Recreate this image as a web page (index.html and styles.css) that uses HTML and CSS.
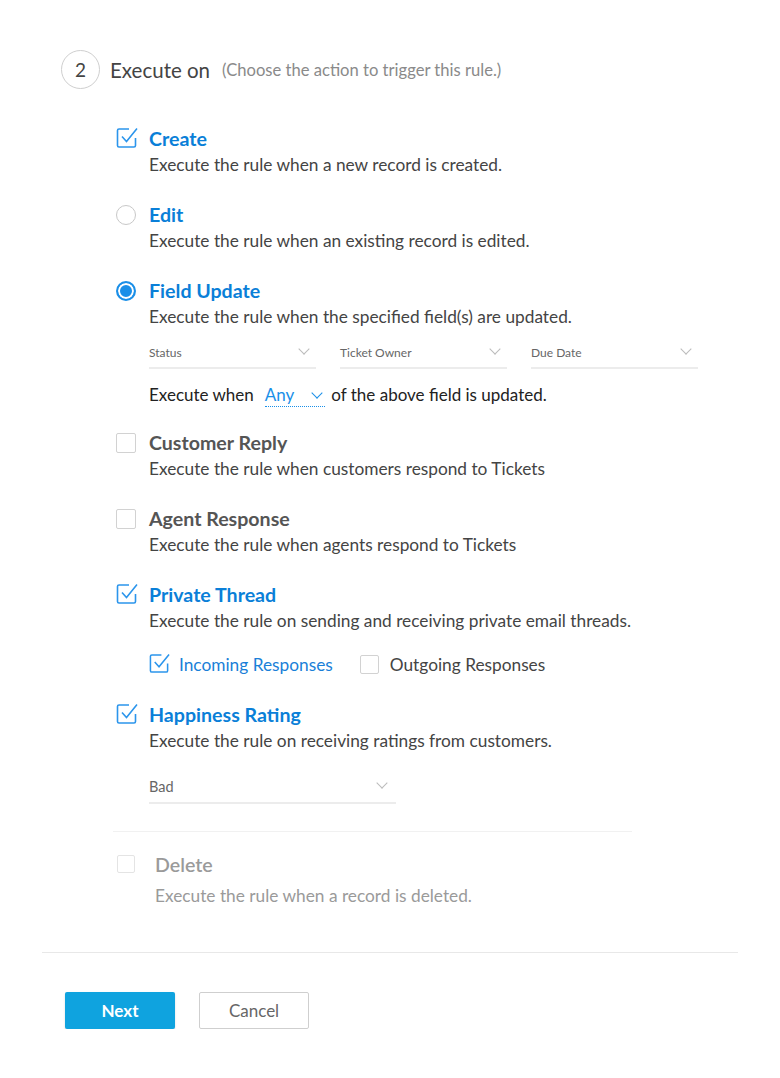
FILE: index.html
```html
<!DOCTYPE html>
<html lang="en">
<head>
    <meta charset="UTF-8">
    <meta name="viewport" content="width=device-width, initial-scale=1.0">
    <title>Execute on</title>
    <link rel="stylesheet" href="styles.css">
</head>
<body>
    <div class="rule-step">
        <div class="step-header">
            <span class="step-num">2</span>
            <span class="step-title">Execute on</span>
            <span class="step-hint">(Choose the action to trigger this rule.)</span>
        </div>

        <div class="options">
            <div class="option">
                <span class="check checked">
                    <svg viewBox="0 0 22 22" width="22" height="22"><path d="M13 2H3a1.5 1.5 0 0 0-1.5 1.5v15A1.5 1.5 0 0 0 3 20h15a1.5 1.5 0 0 0 1.5-1.5V11" fill="none" stroke="#2b95ec" stroke-width="1.6"/><path d="M6 9.5l4.5 5L21 1.5" fill="none" stroke="#2b95ec" stroke-width="1.6"/></svg>
                </span>
                <div class="option-body">
                    <div class="option-title active">Create</div>
                    <div class="option-desc">Execute the rule when a new record is created.</div>
                </div>
            </div>

            <div class="option">
                <span class="radio"></span>
                <div class="option-body">
                    <div class="option-title active">Edit</div>
                    <div class="option-desc">Execute the rule when an existing record is edited.</div>
                </div>
            </div>

            <div class="option field-update">
                <span class="radio selected"></span>
                <div class="option-body">
                    <div class="option-title active">Field Update</div>
                    <div class="option-desc">Execute the rule when the specified field(s) are updated.</div>
                    <div class="field-selects">
                        <div class="select">Status <span class="chev"></span></div>
                        <div class="select">Ticket Owner <span class="chev"></span></div>
                        <div class="select">Due Date <span class="chev"></span></div>
                    </div>
                    <div class="when-line">
                        Execute when <span class="any">Any <span class="chev blue"></span></span> of the above field is updated.
                    </div>
                </div>
            </div>

            <div class="option">
                <span class="check"></span>
                <div class="option-body">
                    <div class="option-title">Customer Reply</div>
                    <div class="option-desc">Execute the rule when customers respond to Tickets</div>
                </div>
            </div>

            <div class="option">
                <span class="check"></span>
                <div class="option-body">
                    <div class="option-title">Agent Response</div>
                    <div class="option-desc">Execute the rule when agents respond to Tickets</div>
                </div>
            </div>

            <div class="option private-thread">
                <span class="check checked">
                    <svg viewBox="0 0 22 22" width="22" height="22"><path d="M13 2H3a1.5 1.5 0 0 0-1.5 1.5v15A1.5 1.5 0 0 0 3 20h15a1.5 1.5 0 0 0 1.5-1.5V11" fill="none" stroke="#2b95ec" stroke-width="1.6"/><path d="M6 9.5l4.5 5L21 1.5" fill="none" stroke="#2b95ec" stroke-width="1.6"/></svg>
                </span>
                <div class="option-body">
                    <div class="option-title active">Private Thread</div>
                    <div class="option-desc">Execute the rule on sending and receiving private email threads.</div>
                    <div class="sub-checks">
                        <label class="sub-check on">
                            <span class="check checked small">
                                <svg viewBox="0 0 22 22" width="21" height="21"><path d="M13 2H3a1.5 1.5 0 0 0-1.5 1.5v15A1.5 1.5 0 0 0 3 20h15a1.5 1.5 0 0 0 1.5-1.5V11" fill="none" stroke="#2b95ec" stroke-width="1.6"/><path d="M6 9.5l4.5 5L21 1.5" fill="none" stroke="#2b95ec" stroke-width="1.6"/></svg>
                            </span>
                            Incoming Responses
                        </label>
                        <label class="sub-check">
                            <span class="check small"></span>
                            Outgoing Responses
                        </label>
                    </div>
                </div>
            </div>

            <div class="option">
                <span class="check checked">
                    <svg viewBox="0 0 22 22" width="22" height="22"><path d="M13 2H3a1.5 1.5 0 0 0-1.5 1.5v15A1.5 1.5 0 0 0 3 20h15a1.5 1.5 0 0 0 1.5-1.5V11" fill="none" stroke="#2b95ec" stroke-width="1.6"/><path d="M6 9.5l4.5 5L21 1.5" fill="none" stroke="#2b95ec" stroke-width="1.6"/></svg>
                </span>
                <div class="option-body">
                    <div class="option-title active">Happiness Rating</div>
                    <div class="option-desc">Execute the rule on receiving ratings from customers.</div>
                    <div class="select wide">Bad <span class="chev"></span></div>
                </div>
            </div>

            <div class="divider"></div>

            <div class="option disabled">
                <span class="check"></span>
                <div class="option-body">
                    <div class="option-title">Delete</div>
                    <div class="option-desc">Execute the rule when a record is deleted.</div>
                </div>
            </div>
        </div>

        <div class="footer">
            <button class="btn btn-primary">Next</button>
            <button class="btn btn-default">Cancel</button>
        </div>
    </div>
</body>
</html>
```

FILE: styles.css
```css
body {
    margin: 0;
    background: #fff;
    font-family: 'Lato', 'Liberation Sans', sans-serif;
    color: #444;
}

.rule-step {
    width: 780px;
}

.step-header {
    display: flex;
    align-items: center;
    padding: 50px 0 0 61px;
}

.step-num {
    width: 37px;
    height: 37px;
    border: 1px solid #cfcfcf;
    border-radius: 50%;
    display: flex;
    align-items: center;
    justify-content: center;
    font-size: 19px;
    color: #444;
}

.step-title {
    margin-left: 10px;
    font-size: 20.5px;
    color: #444;
}

.step-hint {
    margin-left: 12px;
    font-size: 16.6px;
    color: #8a8a8a;
}

.options {
    padding: 38px 0 0 116px;
}

.option {
    display: flex;
    margin-bottom: 26px;
}

.option.field-update {
    margin-bottom: 24px;
}

.option.private-thread {
    margin-bottom: 28px;
}

.option-body {
    margin-left: 13px;
}

.option-title {
    font-size: 19.6px;
    line-height: 24px;
    font-weight: 700;
    color: #555;
}

.option-title.active {
    color: #0a7fd8;
}

.option-desc {
    margin-top: 2px;
    font-size: 17.3px;
    line-height: 24px;
    color: #444;
}

/* checkbox + radio */
.check {
    width: 20px;
    height: 20px;
    flex-shrink: 0;
    margin-top: 2px;
    box-sizing: border-box;
    border: 1px solid #d2d2d2;
    border-radius: 2px;
    position: relative;
}

.check.checked {
    border: none;
}

.check.checked svg {
    position: absolute;
    left: 0;
    top: -2px;
}

.radio {
    width: 20px;
    height: 20px;
    flex-shrink: 0;
    margin-top: 2px;
    box-sizing: border-box;
    border: 1px solid #c8c8c8;
    border-radius: 50%;
}

.radio.selected {
    border: 2px solid #1a8fe8;
    background: #1a8fe8;
    box-shadow: inset 0 0 0 2px #fff;
}

/* selects */
.field-selects {
    display: flex;
    gap: 24px;
    margin-top: 8px;
}

.select {
    width: 167px;
    height: 32px;
    box-sizing: border-box;
    border-bottom: 2px solid #ececec;
    font-size: 12px;
    color: #666;
    display: flex;
    align-items: center;
    justify-content: space-between;
    padding-right: 8px;
}

.select.wide {
    width: 247px;
    height: 34px;
    margin-top: 17px;
    font-size: 14.5px;
    padding-right: 10px;
}

.chev {
    width: 7px;
    height: 7px;
    border-right: 1px solid #bbb;
    border-bottom: 1px solid #bbb;
    transform: rotate(45deg);
    margin-top: -6px;
}

.chev.blue {
    border-color: #1a8fe8;
    margin-left: 19px;
    margin-top: -4px;
}

.when-line {
    margin-top: 14px;
    font-size: 17px;
    line-height: 24px;
    color: #222;
    display: flex;
    align-items: center;
}

.any {
    display: inline-flex;
    align-items: center;
    margin: 0 6px 0 11px;
    padding-right: 4px;
    color: #1a8fe8;
    border-bottom: 1px dotted #1a8fe8;
    line-height: 22px;
}

.sub-checks {
    display: flex;
    align-items: center;
    margin-top: 21px;
    gap: 27px;
}

.sub-check {
    display: flex;
    align-items: center;
    font-size: 17.3px;
    color: #444;
}

.sub-check.on {
    color: #1a7fd8;
}

.check.small {
    width: 19px;
    height: 19px;
    margin: 0 11px 0 0;
}

.check.small.checked svg {
    top: -2px;
}

.divider {
    width: 519px;
    margin: 27px 0 0 -3px;
    border-top: 1px solid #f1f1f1;
}

.option.disabled {
    margin-top: 21px;
}

.option.disabled .check {
    width: 18px;
    height: 18px;
    margin-left: 1px;
    border-color: #e4e4e4;
}

.option.disabled .option-body {
    margin-left: 20px;
}

.option.disabled .option-title {
    color: #9a9a9a;
    font-weight: 600;
}

.option.disabled .option-desc {
    margin-top: 7px;
    color: #9a9a9a;
}

.footer {
    margin: 44px 42px 0 42px;
    border-top: 1px solid #e8e8e8;
    padding: 39px 0 0 23px;
    display: flex;
    gap: 24px;
}

.btn {
    width: 110px;
    height: 37px;
    border-radius: 2px;
    font-family: inherit;
    font-size: 17px;
    cursor: pointer;
}

.btn-primary {
    border: none;
    background: #0fa3df;
    color: #fff;
    font-weight: 700;
    box-shadow: 0 1px 2px rgba(0, 0, 0, 0.15);
}

.btn-default {
    background: #fff;
    border: 1px solid #cfcfcf;
    color: #666;
}
```
